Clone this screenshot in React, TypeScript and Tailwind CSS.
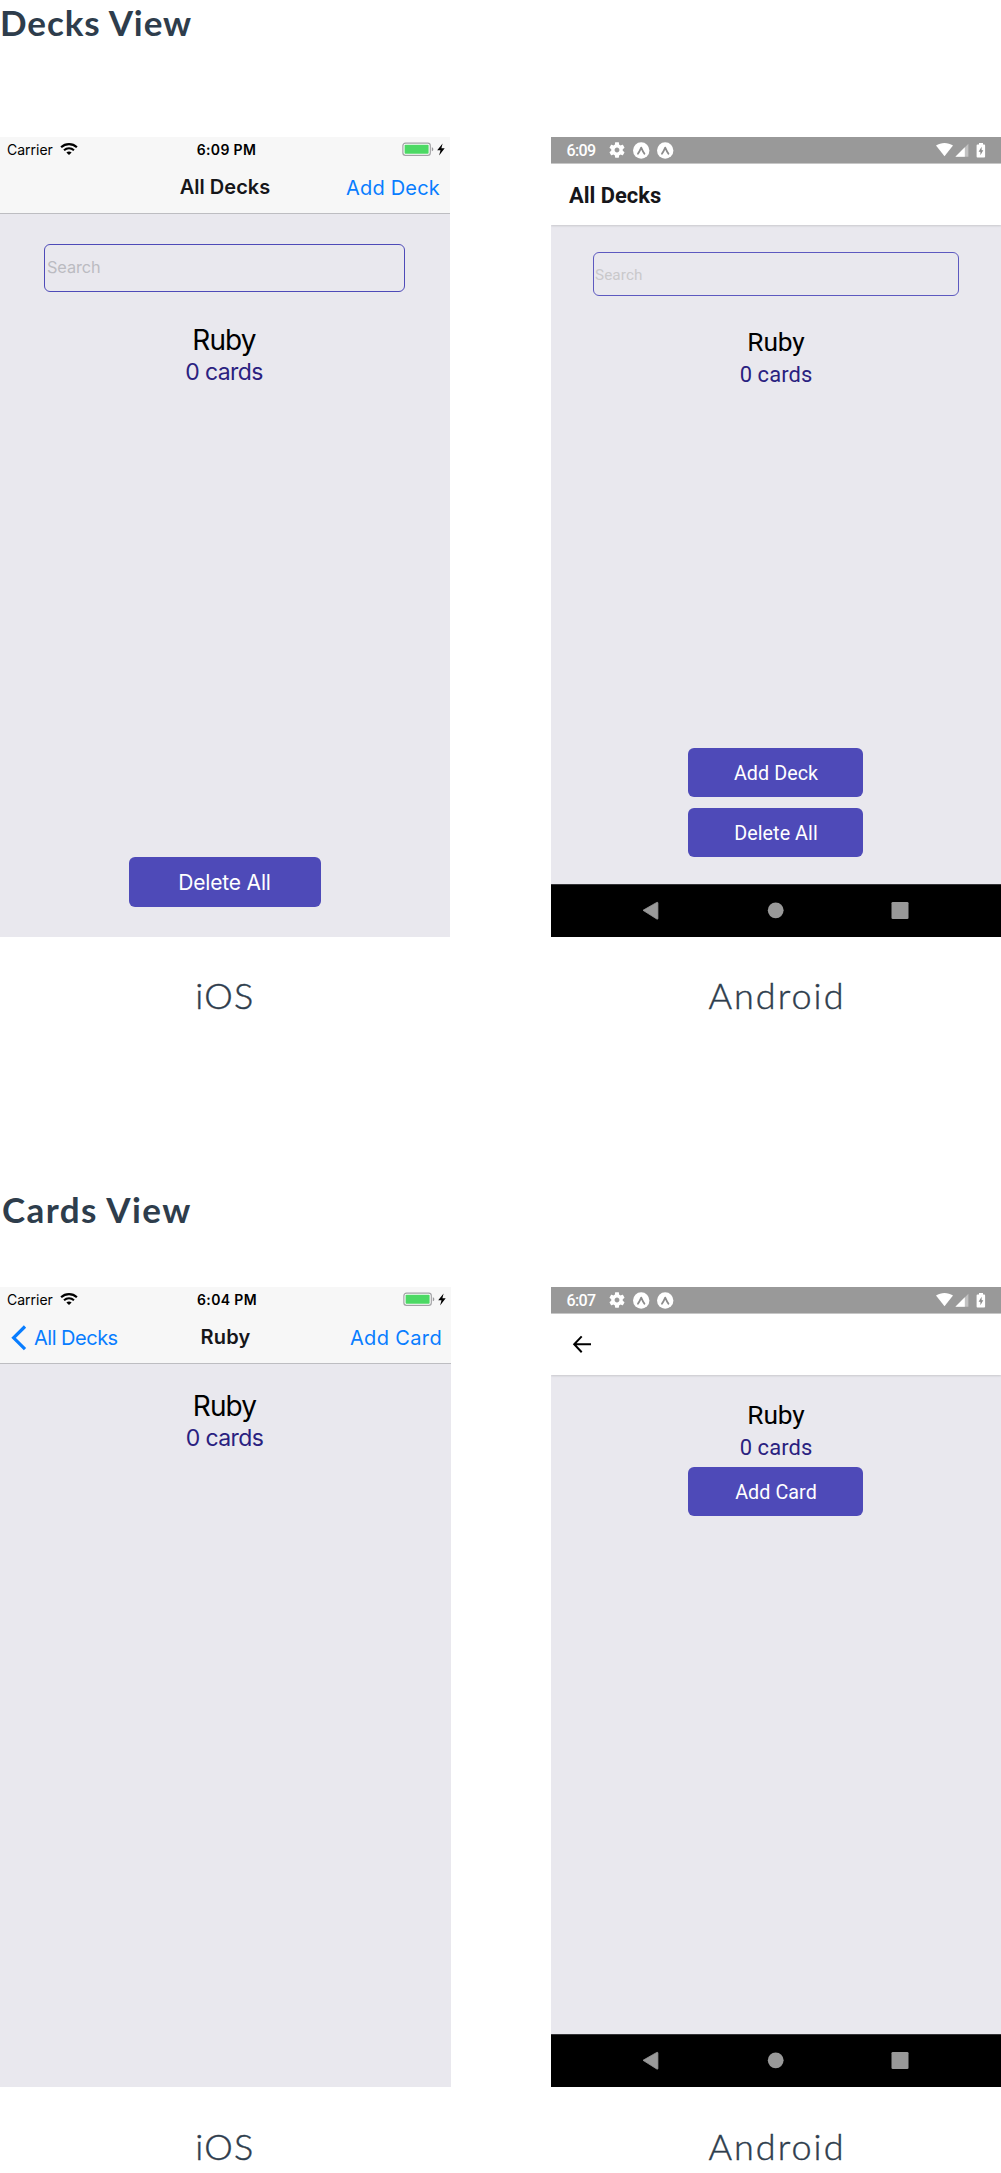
import type { ReactNode } from 'react';

function IosWifi() {
  return (
    <svg width="18" height="12" viewBox="0 0 18 12" className="ml-[7px] mt-[6px] shrink-0" fill="none" stroke="#000">
      <path d="M1.1 4.2C5.6 0.1 12.4 0.1 16.9 4.2" strokeWidth="2.2" />
      <path d="M4 7.2C6.9 4.7 11.1 4.7 14 7.2" strokeWidth="2.1" />
      <path d="M6.4 9.4C7.9 8.1 10.1 8.1 11.6 9.4L9 12Z" fill="#000" stroke="none" />
    </svg>
  );
}

function IosBattery() {
  return (
    <svg width="43" height="15" viewBox="0 0 43 15" className="mt-[5px] mr-[5px]">
      <rect x="0.9" y="1.1" width="27.4" height="12.2" rx="2.6" fill="#fff" stroke="#a2a2a5" strokeWidth="1.2" />
      <rect x="2.6" y="2.8" width="24" height="8.9" rx="0.8" fill="#4cd964" />
      <path d="M29.800 5.200c1 .3 1.500 1.100 1.500 2s-.5 1.700-1.500 2z" fill="#9b9b9e" />
      <path d="M40.600 1.400L35.200 8.200H38.500L37.100 13.400L42.700 6.300H39.400Z" fill="#000" />
    </svg>
  );
}

function IosPhone({
  time,
  width,
  nav,
  children,
}: {
  time: string;
  width: string;
  nav: ReactNode;
  children: ReactNode;
}) {
  return (
    <div className={`${width} flex h-[800px] shrink-0 flex-col bg-[#e9e8ee] font-[Inter,sans-serif]`}>
      <div className="h-[77px] border-b border-[#bdbdc1] bg-[#f7f7f7]">
        <div className="grid h-[38px] grid-cols-[1fr_auto_1fr]">
          <div className="flex pl-[7px]">
            <span className="mt-1 text-[14px] leading-[17px] text-black">Carrier</span>
            <IosWifi />
          </div>
          <span className="mt-1 ml-[3px] text-[14px] leading-[17px] font-semibold tracking-[0.35px] text-black">{time}</span>
          <div className="flex justify-end">
            <IosBattery />
          </div>
        </div>
        <div className="grid grid-cols-[1fr_auto_1fr] text-[20px] leading-6">{nav}</div>
      </div>
      {children}
    </div>
  );
}

function Gear() {
  return (
    <svg width="16" height="16" viewBox="2 2 20 20" className="mt-[5px] ml-[12px]" fill="#fff">
      <path d="M19.140 12.940c.04-.3.06-.61.06-.94 0-.32-.02-.64-.07-.94l2.030-1.580c.18-.14.23-.41.12-.61l-1.920-3.320c-.12-.22-.37-.29-.59-.22l-2.390.96c-.5-.38-1.030-.7-1.620-.94l-.36-2.540c-.04-.24-.24-.41-.48-.41h-3.840c-.24 0-.43.17-.47.41l-.36 2.540c-.59.24-1.130.57-1.620.94l-2.390-.96c-.22-.08-.47 0-.59.22L2.740 8.870c-.12.21-.08.47.12.61l2.030 1.580c-.05.3-.09.63-.09.94s.02.64.07.94l-2.030 1.580c-.18.14-.23.41-.12.61l1.920 3.320c.12.22.37.29.59.22l2.390-.96c.5.38 1.030.7 1.620.94l.36 2.540c.05.24.24.41.48.41h3.840c.24 0 .44-.17.47-.41l.36-2.540c.59-.24 1.130-.56 1.620-.94l2.390.96c.22.08.47 0 .59-.22l1.920-3.320c.12-.22.07-.47-.12-.61l-2.010-1.580zM12 15c-1.650 0-3-1.350-3-3s1.350-3 3-3 3 1.350 3 3-1.350 3-3 3z" />
    </svg>
  );
}

function ExpoBadge({ className }: { className: string }) {
  return (
    <svg width="17" height="17" viewBox="0 0 17 17" className={className}>
      <circle cx="8.200" cy="8.500" r="8.200" fill="#fff" />
      <path d="M5 11.700C6.200 10.300 7.200 8 8.200 5.700C9.200 8 10.200 10.300 11.400 11.700" fill="none" stroke="#8c8c8c" strokeWidth="1.800" strokeLinecap="round" strokeLinejoin="round" />
    </svg>
  );
}

function AndroidSignals() {
  return (
    <svg width="50" height="16" viewBox="0 0 50 16" className="mt-[5px] mr-[15px] ml-auto">
      <path d="M0 3.600C5 0.100 12 0.100 17 3.600L8.500 14.200Z" fill="#fff" />
      <path d="M32.400 1.700V14.800H19.400Z" fill="#fff" fillOpacity="0.400" />
      <path d="M28.800 5.300V14.800H19.400Z" fill="#fff" />
      <path d="M43 1.100H47V2.600H48.200Q49.100 2.600 49.100 3.500V14.600Q49.100 15.500 48.200 15.500H41.500Q40.600 15.500 40.600 14.600V3.500Q40.600 2.600 41.500 2.600H43Z" fill="#fff" />
      <path d="M45.600 4.800L42.600 9.700H44.400V13.200L47.300 8.300H45.600Z" fill="#8c8c8c" />
    </svg>
  );
}

function AndroidPhone({ time, nav, children }: { time: string; nav: ReactNode; children: ReactNode }) {
  return (
    <div className="flex h-[800px] w-[450px] shrink-0 flex-col overflow-hidden bg-[#e9e8ee] font-[Roboto,sans-serif]">
      <div className="flex h-[27px] shrink-0 border-b border-[#c8c8c8] bg-[#999999] pl-[15.500px]">
        <span className="mt-1 w-[30px] text-[16px] leading-[19px] font-medium tracking-[-0.600px] text-white">{time}</span>
        <Gear />
        <ExpoBadge className="mt-[5px] ml-[8px]" />
        <ExpoBadge className="mt-[5px] ml-[7px]" />
        <AndroidSignals />
      </div>
      <div className="z-10 h-[61px] shrink-0 bg-white shadow-[0_1px_2px_rgba(0,0,0,0.14)]">{nav}</div>
      <div className="flex grow flex-col items-center">{children}</div>
      <div className="h-[53px] shrink-0 border-t border-[#333336] bg-black">
        <svg width="450" height="52" viewBox="0 0 450 52" fill="#999999">
          <path d="M92 25.300L105.800 17.400Q106.900 17 106.900 18V33.400Q106.900 34.500 105.800 34Z" stroke="#999999" strokeWidth="0.800" />
          <circle cx="224.700" cy="25.300" r="7.900" />
          <rect x="340.500" y="17" width="17" height="17" rx="1.300" />
        </svg>
      </div>
    </div>
  );
}

function Captions({ className }: { className: string }) {
  return (
    <div className={`${className} flex justify-between text-[36px] leading-[42px] font-light [-webkit-text-stroke:0.450px_#2e3d4c]`}>
      <div className="w-[450px] text-center tracking-[1.400px]">iOS</div>
      <div className="w-[450px] pl-[2px] text-center tracking-[2.050px]">Android</div>
    </div>
  );
}

function AndroidDeck({ className }: { className: string }) {
  return (
    <div className={`${className} text-center`}>
      <div className="text-[26.300px] leading-[30px] tracking-[-0.100px] text-black">Ruby</div>
      <div className="mt-[5px] text-[21.900px] leading-[25px] tracking-[0.100px] text-[#2a2180]">0 cards</div>
    </div>
  );
}

function IosDeck({ className }: { className: string }) {
  return (
    <div className={`${className} pr-[2px] text-center`}>
      <div className="text-[28px] leading-[34px] tracking-[-0.900px] text-black">Ruby</div>
      <div className="mt-px text-[23px] leading-7 tracking-[-0.600px] text-[#2a2180]">0 cards</div>
    </div>
  );
}

function AndroidButton({ className, children }: { className: string; children: ReactNode }) {
  return (
    <button className={`${className} mr-px flex h-[49px] w-[175px] justify-center rounded-[6px] bg-[#4e4ab8] pt-[14px] pl-px text-[19.700px] leading-[23px] tracking-[0.080px] text-white`}>
      {children}
    </button>
  );
}

export default function App() {
  return (
    <div className="h-[2173px] w-[1001px] overflow-hidden bg-white font-[Lato,sans-serif] text-[#2e3d4c]">
      <h1 className="pt-px text-[35px] leading-[42px] font-bold tracking-[0.900px]">Decks View</h1>
      <div className="mt-[94px] flex justify-between">
        <IosPhone
          time="6:09 PM"
          width="w-[450px]"
          nav={
            <>
              <span />
              <span className="font-semibold text-[#16161a]">All Decks</span>
              <span className="mt-px mr-[10px] text-right tracking-[0.200px] text-[#087dff]">Add Deck</span>
            </>
          }
        >
          <div className="mt-[30px] ml-[44px] h-[48px] w-[361px] rounded-[6px] border border-[#4e4ab8] pt-[12px] pl-[2px] text-[16.300px] leading-5 tracking-[-0.080px] text-[#bbbbc1]">
            Search
          </div>
          <IosDeck className="mt-[31px]" />
          <button className="mt-auto mb-[30px] ml-[129px] flex h-[50px] w-[192px] justify-center rounded-[6px] bg-[#4e4ab8] pt-[13px] pr-px text-[21px] leading-[25px] tracking-[-0.180px] text-white">
            Delete All
          </button>
        </IosPhone>
        <AndroidPhone
          time="6:09"
          nav={<div className="pt-[19px] pl-[18px] text-[21.900px] leading-[25px] font-bold text-[#16161a]">All Decks</div>}
        >
          <div className="mt-[27px] h-[44px] w-[366px] rounded-[6px] border border-[#5d59c0] pt-[13px] pl-px text-[15.300px] leading-[18px] tracking-[0.080px] text-[#c9c9cb]">
            Search
          </div>
          <AndroidDeck className="mt-[31px]" />
          <AndroidButton className="mt-auto mb-[11px]">Add Deck</AndroidButton>
          <AndroidButton className="mb-[27px]">Delete All</AndroidButton>
        </AndroidPhone>
      </div>
      <Captions className="mt-[37px]" />
      <h1 className="mt-[172px] pl-[2px] text-[35px] leading-[42px] font-bold tracking-[1.400px]">Cards View</h1>
      <div className="mt-[57px] flex justify-between">
        <IosPhone
          time="6:04 PM"
          width="w-[451px]"
          nav={
            <>
              <span className="flex text-[#087dff]">
                <svg width="16" height="26" viewBox="0 0 16 26" className="ml-[11px]" fill="none" stroke="#087dff" strokeWidth="3.200">
                  <path d="M14 1.500L2.600 12.800L14 24.200" strokeLinecap="butt" />
                </svg>
                <span className="mt-px ml-[7px] tracking-[-0.500px]">All Decks</span>
              </span>
              <span className="font-semibold tracking-[0.150px] text-[#16161a]">Ruby</span>
              <span className="mt-px mr-[9px] text-right tracking-[0.360px] text-[#087dff]">Add Card</span>
            </>
          }
        >
          <IosDeck className="mt-[25px]" />
        </IosPhone>
        <AndroidPhone
          time="6:07"
          nav={
            <svg width="20" height="18" viewBox="0 0 20 18" className="ml-[21px] translate-y-[21px]" fill="none" stroke="#000" strokeWidth="2">
              <path d="M19 9.300H2.600M9.700 1.400L2.200 9.300L9.700 17.200" />
            </svg>
          }
        >
          <AndroidDeck className="mt-[25px]" />
          <AndroidButton className="mt-[7px]">Add Card</AndroidButton>
        </AndroidPhone>
      </div>
      <Captions className="mt-[38px]" />
    </div>
  );
}
